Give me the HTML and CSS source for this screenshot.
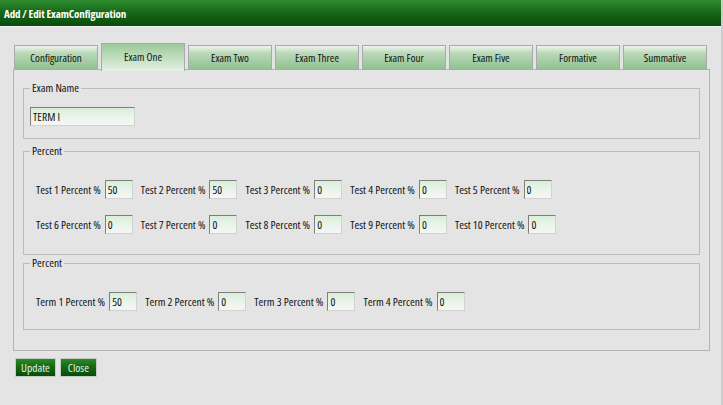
FILE: index.html
```html
<!DOCTYPE html>
<html>
<head>
<meta charset="utf-8">
<title>Add / Edit ExamConfiguration</title>
<link rel="stylesheet" href="styles.css">
</head>
<body>
<div class="window">
  <div class="titlebar">Add / Edit ExamConfiguration</div>
  <div class="content">
    <div class="tabs">
      <div class="tab">Configuration</div>
      <div class="tab active">Exam One</div>
      <div class="tab">Exam Two</div>
      <div class="tab">Exam Three</div>
      <div class="tab">Exam Four</div>
      <div class="tab">Exam Five</div>
      <div class="tab">Formative</div>
      <div class="tab">Summative</div>
    </div>
    <div class="panel">
      <fieldset class="group g-name">
        <legend>Exam Name</legend>
        <input class="field wide" type="text" value="TERM I">
      </fieldset>
      <fieldset class="group g-test">
        <legend>Percent</legend>
        <div class="row">
          <label class="item"><span>Test 1 Percent %</span><input class="field" type="text" value="50"></label>
          <label class="item"><span>Test 2 Percent %</span><input class="field" type="text" value="50"></label>
          <label class="item"><span>Test 3 Percent %</span><input class="field" type="text" value="0"></label>
          <label class="item"><span>Test 4 Percent %</span><input class="field" type="text" value="0"></label>
          <label class="item"><span>Test 5 Percent %</span><input class="field" type="text" value="0"></label>
        </div>
        <div class="row">
          <label class="item"><span>Test 6 Percent %</span><input class="field" type="text" value="0"></label>
          <label class="item"><span>Test 7 Percent %</span><input class="field" type="text" value="0"></label>
          <label class="item"><span>Test 8 Percent %</span><input class="field" type="text" value="0"></label>
          <label class="item"><span>Test 9 Percent %</span><input class="field" type="text" value="0"></label>
          <label class="item"><span>Test 10 Percent %</span><input class="field" type="text" value="0"></label>
        </div>
      </fieldset>
      <fieldset class="group g-term">
        <legend>Percent</legend>
        <div class="row">
          <label class="item"><span>Term 1 Percent %</span><input class="field" type="text" value="50"></label>
          <label class="item"><span>Term 2 Percent %</span><input class="field" type="text" value="0"></label>
          <label class="item"><span>Term 3 Percent %</span><input class="field" type="text" value="0"></label>
          <label class="item"><span>Term 4 Percent %</span><input class="field" type="text" value="0"></label>
        </div>
      </fieldset>
    </div>
    <div class="actions">
      <button class="btn" type="button">Update</button>
      <button class="btn" type="button">Close</button>
    </div>
  </div>
</div>
</body>
</html>
```
FILE: styles.css
```css
* { box-sizing: border-box; }
html, body {
  margin: 0;
  padding: 0;
  background: #e4e4e4;
}
body {
  font-family: "Open Sans", "Liberation Sans", Arial, sans-serif;
  font-stretch: 75%;
  font-size: 11.5px;
  color: #111;
}
.window {
  width: 723px;
  height: 405px;
  border-right: 2px solid #cdcdcd;
  overflow: hidden;
}
.titlebar {
  height: 27px;
  line-height: 27px;
  padding-left: 4px;
  font-size: 11px;
  letter-spacing: -0.1px;
  color: #fff;
  font-weight: bold;
  background: linear-gradient(#2f8d2f 0%, #17691a 45%, #0a4b0c 100%);
  border-bottom: 1px solid #f4f4f4;
}
.content {
  padding: 16px 0 0 13px;
}
.tabs {
  display: flex;
  gap: 3px;
  padding-left: 1px;
  align-items: flex-end;
  height: 27px;
  position: relative;
  z-index: 1;
  margin-bottom: -1px;
}
.tab {
  width: 84px;
  height: 25px;
  border: 1px solid #a9a9a9;
  border-bottom: none;
  background: linear-gradient(#eef4ee 0%, #b9d9b9 30%, #8fbf8f 100%);
  text-align: center;
  line-height: 24px;
  font-size: 11px;
  color: #111;
}
.tab.active {
  height: 28px;
  margin-bottom: -1px;
  line-height: 26px;
  background: linear-gradient(#9cc99c 0%, #c6e2c6 60%, #e6f1e6 100%);
}
.panel {
  width: 697px;
  height: 282px;
  border: 1px solid #b3b3b3;
  padding: 11px 9px 0 9px;
}
.group {
  margin: 0;
  padding: 0 0 0 6px;
  border: 1px solid #bcbcbc;
  min-width: 0;
}
.group legend {
  padding: 0 2px;
  line-height: 14px;
}
.g-name { height: 58px; padding-top: 12px; }
.g-test { height: 111px; margin-top: 5px; padding-top: 22px; }
.g-term { height: 74px; margin-top: 1px; padding-top: 22px; }
.row {
  display: flex;
  gap: 8px;
  padding-left: 6px;
}
.row + .row { margin-top: 16px; }
.item {
  display: flex;
  align-items: center;
  gap: 4px;
}
.field {
  width: 28px;
  height: 19px;
  margin: 0;
  padding: 0 2px;
  font: inherit;
  color: #111;
  border: 1px solid;
  border-color: #7e7e7e #d2d2d2 #d2d2d2 #7e7e7e;
  background: linear-gradient(#d9eed9 0%, #ebf5eb 55%, #f5f5f5 100%);
  outline: none;
}
.field.wide { width: 105px; }
.actions {
  display: flex;
  gap: 4px;
  padding: 7px 0 0 2px;
}
.btn {
  min-width: 37px;
  height: 19px;
  margin: 0;
  padding: 0 5px;
  font: inherit;
  color: #e6efe6;
  border: 1px solid #c2cec2;
  background: linear-gradient(#2a8a2a 0%, #166a16 45%, #0a4a0a 100%);
  cursor: pointer;
}
```
